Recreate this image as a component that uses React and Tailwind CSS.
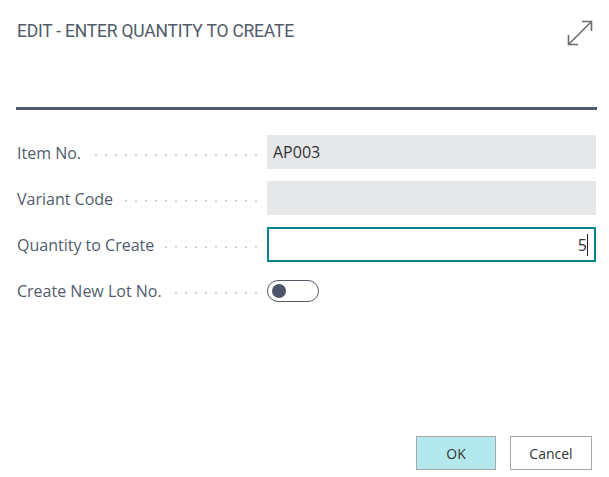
import React from 'react';

const fields = [
  { label: 'Item No.', type: 'readonly', value: 'AP003' },
  { label: 'Variant Code', type: 'readonly', value: '' },
  { label: 'Quantity to Create', type: 'focused', value: '5' },
  { label: 'Create New Lot No.', type: 'toggle' },
];

function Leader() {
  const dots = Array.from({ length: 30 });
  return (
    <div className="flex-1 ml-[10px] overflow-hidden flex justify-end gap-[8px] mt-[5px]">
      {dots.map((_, i) => (
        <span key={i} className="shrink-0 w-[2px] h-[2px] rounded-full bg-[#c4c4c4]" />
      ))}
    </div>
  );
}

function ExpandIcon() {
  return (
    <svg width="26" height="26" viewBox="0 0 26 26" fill="none" stroke="#6b6b6b" strokeWidth="1.6">
      <line x1="1.5" y1="24.5" x2="24.5" y2="1.5" />
      <polyline points="15,1.5 24.5,1.5 24.5,11" />
      <polyline points="1.5,15 1.5,24.5 11,24.5" />
    </svg>
  );
}

function Field({ field }) {
  if (field.type === 'toggle') {
    return (
      <div className="flex items-center h-full">
        <div className="w-[52px] h-[22px] rounded-full border border-[#555b66] flex items-center pl-[4px]">
          <span className="w-[14px] h-[14px] rounded-full bg-[#4b566a]" />
        </div>
      </div>
    );
  }
  if (field.type === 'focused') {
    return (
      <div className="h-[35px] border-2 border-[#00868b] flex items-center justify-end pr-[6px] text-[16px] text-[#333]">
        <span>{field.value}</span>
        <span className="w-px h-[22px] bg-[#222]" />
      </div>
    );
  }
  return (
    <div className="h-[34px] bg-[#e6e7e9] flex items-center pl-[6px] text-[16px] text-[#333]">
      {field.value}
    </div>
  );
}

export default function App() {
  return (
    <div className="w-[609px] h-[477px] bg-white flex flex-col font-['Open_Sans',sans-serif]">
      {/* Header */}
      <div className="h-[107px] flex items-start justify-between pl-[17px] pr-[16px] pt-[20px]">
        <h1 className="font-['Roboto',sans-serif] text-[18px] leading-[20px] mt-[1px] text-[#4f5a69] tracking-[-0.2px] origin-left scale-x-[0.97]">
          EDIT - ENTER QUANTITY TO CREATE
        </h1>
        <ExpandIcon />
      </div>
      <div className="h-[3px] bg-[#505c6d] ml-[16px] mr-[12px]" />

      {/* Form */}
      <div className="flex flex-col gap-[11px] pt-[25px] pr-[13px]">
        {fields.map((f) => (
          <div key={f.label} className="grid grid-cols-[267px_1fr] h-[35px]">
            <div className="flex items-center pl-[17px] pr-[10px]">
              <span className="text-[16px] text-[#505c6d] whitespace-nowrap">{f.label}</span>
              <Leader />
            </div>
            <Field field={f} />
          </div>
        ))}
      </div>

      {/* Buttons */}
      <div className="mt-auto flex justify-end gap-[14px] pr-[17px] pb-[7px]">
        <button className="w-[80px] h-[34px] bg-[#b3e9ec] border border-[#a6a6a6] text-[14px] text-[#333]">
          OK
        </button>
        <button className="w-[82px] h-[34px] bg-white border border-[#a6a6a6] text-[14px] text-[#333]">
          Cancel
        </button>
      </div>
    </div>
  );
}
